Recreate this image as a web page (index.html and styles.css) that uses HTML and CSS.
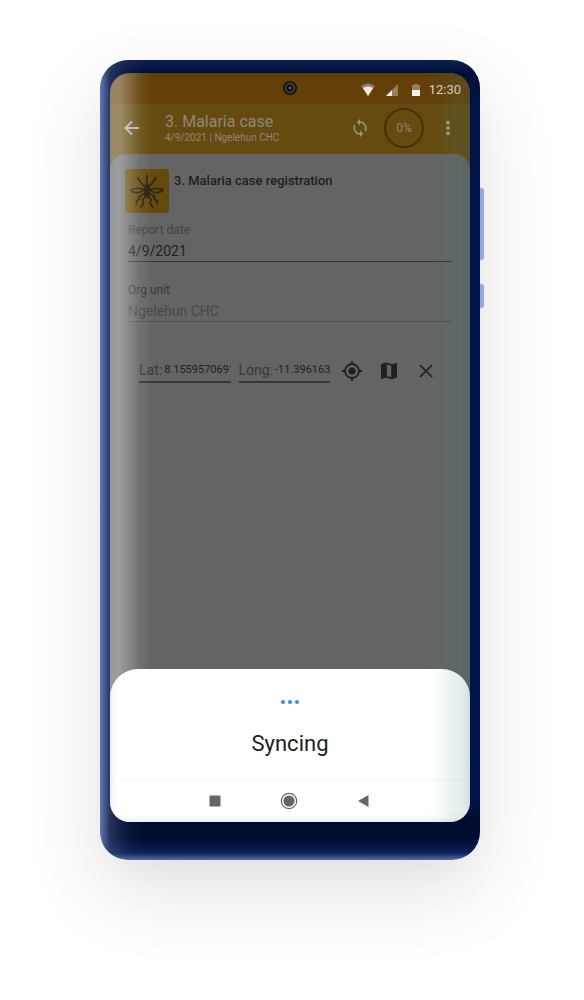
FILE: index.html
```html
<!DOCTYPE html>
<html lang="en">
<head>
<meta charset="utf-8">
<meta name="viewport" content="width=device-width, initial-scale=1">
<title>Malaria case registration</title>
<link rel="stylesheet" href="styles.css">
</head>
<body>
<main class="stage">
  <div class="phone">
    <div class="screen">
      <header class="status-bar">
        <span class="camera"></span>
        <div class="status-icons">
          <svg class="status-icon" viewBox="0 0 16 16" aria-hidden="true"><path d="M1 4Q8-1 15 4L8 14Z" fill="#94815b"/><path d="M3 6Q8 3 13 6L8 14Z" fill="#f4efe6"/></svg>
          <svg class="status-icon" viewBox="0 0 16 16" aria-hidden="true"><path d="M14 2V14H2Z" fill="#94815b"/><path d="M8 8V14H2Z" fill="#f4efe6"/></svg>
          <svg class="status-icon" viewBox="0 0 16 16" aria-hidden="true"><path d="M4 3H6V2H10V3H12V14H4Z" fill="#94815b"/><path d="M4 8H12V14H4Z" fill="#f4efe6"/></svg>
        </div>
        <span class="clock">12:30</span>
      </header>

      <div class="app-bar">
        <button class="icon-button" type="button" aria-label="Back">
          <svg class="icon icon-small" viewBox="0 0 18 18" aria-hidden="true"><path d="M16 9H3M9 2.5L2.5 9L9 15.5" fill="none" stroke="#b4afab" stroke-width="1.8"/></svg>
        </button>
        <div class="heading">
          <h1 class="title">3. Malaria case</h1>
          <p class="subtitle">4/9/2021 | Ngelehun CHC</p>
        </div>
        <button class="icon-button" type="button" aria-label="Sync">
          <svg class="icon" viewBox="0 0 24 24" fill="#969185" aria-hidden="true"><path d="M12 4V1L8 5l4 4V6c3.31 0 6 2.690 6 6 0 1.010-.25 1.970-.7 2.800l1.460 1.460C19.540 15.030 20 13.570 20 12c0-4.420-3.580-8-8-8zm0 14c-3.310 0-6-2.690-6-6 0-1.010.25-1.970.7-2.800L5.240 7.740C4.460 8.970 4 10.430 4 12c0 4.420 3.580 8 8 8v3l4-4-4-4v3z"/></svg>
        </button>
        <span class="progress">0%</span>
        <button class="icon-button" type="button" aria-label="More options">
          <svg class="icon" viewBox="0 0 20 20" fill="#969889" aria-hidden="true"><circle cx="10" cy="4.500" r="2"/><circle cx="10" cy="10" r="2"/><circle cx="10" cy="15.500" r="2"/></svg>
        </button>
      </div>

      <div class="backdrop">
        <form class="form">
          <div class="form-head">
            <svg class="tile" viewBox="0 0 44 44" aria-hidden="true">
              <rect width="44" height="44" rx="3" fill="#654b0b"/>
              <g fill="none" stroke="#282313" stroke-width="1.700" stroke-linecap="round" stroke-linejoin="round">
                <path d="M21.800 6.500V16"/>
                <path d="M12.800 8.800L15.500 13L19.500 17.500M30.800 8.800L28.100 13L24.100 17.500"/>
                <path d="M19.500 20.300Q12 18.500 5.500 20.700Q8 24 13 23.600Q17 23 19.500 20.300ZM24.100 20.300Q31.600 18.500 38.100 20.700Q35.600 24 30.600 23.600Q26.600 23 24.100 20.300Z"/>
                <path d="M19.800 24.300L14 27.500L14.500 30L11.500 32V35M23.800 24.300L29.600 27.500L29.100 30L32.100 32V35"/>
                <path d="M20.500 27L17.500 31L18.500 34.500L16 38M23.100 27L26.100 31L25.100 34.500L27.600 38"/>
              </g>
              <path d="M20 15.500Q21.800 13.500 23.600 15.500L24.500 19.500V26L21.800 29.500L19.100 26V19.500Z" fill="#282313"/>
            </svg>
            <h2 class="form-title">3. Malaria case registration</h2>
          </div>

          <div class="fields">
            <div class="field">
              <label class="field-label" for="report-date">Report date</label>
              <input class="field-input" id="report-date" type="text" value="4/9/2021">
            </div>
            <div class="field">
              <label class="field-label field-label-dark" for="org-unit">Org unit</label>
              <input class="field-input field-input-off" id="org-unit" type="text" value="Ngelehun CHC" disabled>
            </div>
          </div>

          <div class="coordinates">
            <div class="coordinate">
              <label class="coordinate-label" for="lat">Lat:</label>
              <input class="coordinate-input" id="lat" type="text" value="8.1559570691">
            </div>
            <div class="coordinate">
              <label class="coordinate-label" for="long">Long:</label>
              <input class="coordinate-input" id="long" type="text" value="-11.39616371">
            </div>
            <div class="coordinate-actions">
              <button class="icon-button" type="button" aria-label="Use my location">
                <svg class="icon" viewBox="0 0 20 20" aria-hidden="true"><circle cx="10" cy="10" r="7" fill="none" stroke="#202020" stroke-width="1.800"/><circle cx="10" cy="10" r="3.600" fill="#202020"/><path d="M10 0V3M10 17V20M0 10H3M17 10H20" stroke="#202020" stroke-width="1.800"/></svg>
              </button>
              <button class="icon-button" type="button" aria-label="Open map">
                <svg class="icon" viewBox="0 0 20 20" aria-hidden="true"><path fill="#202020" fill-rule="evenodd" d="M2 3.200L7 1.500L13 3.300L18 1.800V16.500L13 18.300L7 16.500L2 18.200ZM7.800 3.500V15L12.200 16.300V4.800Z"/></svg>
              </button>
              <button class="icon-button" type="button" aria-label="Clear coordinates">
                <svg class="icon" viewBox="0 0 20 20" aria-hidden="true"><path d="M4 4L16 16M16 4L4 16" stroke="#202020" stroke-width="1.700"/></svg>
              </button>
            </div>
          </div>
        </form>
      </div>

      <section class="sheet" role="status">
        <div class="dots"><span class="dot"></span><span class="dot"></span><span class="dot"></span></div>
        <p class="message">Syncing</p>
      </section>

      <nav class="nav-bar">
        <button class="icon-button" type="button" aria-label="Recent apps">
          <svg class="icon" viewBox="0 0 20 20" aria-hidden="true"><rect x="4.500" y="4.500" width="11" height="11" fill="#666"/></svg>
        </button>
        <button class="icon-button" type="button" aria-label="Home">
          <svg class="icon" viewBox="0 0 20 20" aria-hidden="true"><circle cx="10" cy="10" r="7.700" fill="none" stroke="#666" stroke-width="1.200"/><circle cx="10" cy="10" r="5.600" fill="#666"/></svg>
        </button>
        <button class="icon-button" type="button" aria-label="Back">
          <svg class="icon" viewBox="0 0 20 20" aria-hidden="true"><path d="M15.500 4V16L5 10Z" fill="#666"/></svg>
        </button>
      </nav>
    </div>
  </div>
  <div class="side-keys"><span class="key key-volume"></span><span class="key key-power"></span></div>
</main>
</body>
</html>
```

FILE: styles.css
```css
* {
  box-sizing: border-box;
}

body {
  margin: 0;
  background: #fff;
  color: #202020;
  font-family: Roboto, "Liberation Sans", sans-serif;
}

h1, h2, p {
  margin: 0;
}

button {
  padding: 0;
  border: 0;
  background: none;
}

input {
  min-width: 0;
  padding: 0;
  border: 0;
  border-radius: 0;
  background: none;
  color: inherit;
  font-family: inherit;
}

.stage {
  display: flex;
  justify-content: center;
  padding: 60px 16px 140px;
}

.phone {
  flex: 0 1 380px;
  min-width: 0;
  padding: 13px 10px 38px;
  border-radius: 28px;
  background:
    linear-gradient(90deg, rgba(108, 132, 190, 0.9), rgba(90, 105, 150, 0.4) 10px, rgba(90, 105, 150, 0.1) 28px, transparent 42px),
    linear-gradient(0deg, rgba(100, 120, 175, 0.9), rgba(14, 36, 100, 0.8) 7px, transparent 22px),
    linear-gradient(180deg, #0c2052, #000f38 13px, #001348 40px, #001348 740px, #000d30 762px);
  box-shadow: 0 30px 80px rgba(0, 0, 0, 0.12), 0 10px 30px rgba(0, 0, 0, 0.02);
}

.side-keys {
  display: flex;
  flex-direction: column;
  gap: 24px;
  width: 4px;
  padding-top: 128px;
}

.key {
  border-radius: 0 3px 3px 0;
  background: #97a9dc;
}

.key-volume {
  height: 72px;
}

.key-power {
  height: 24px;
}

.screen {
  position: relative;
  display: flex;
  flex-direction: column;
  overflow: hidden;
  border-radius: 20px;
  background: #654b0f;
}

.screen::after {
  content: "";
  position: absolute;
  inset: 0;
  pointer-events: none;
  background:
    linear-gradient(90deg, rgba(255, 255, 255, 0.38), rgba(255, 255, 255, 0.36) 10px, rgba(255, 255, 255, 0.08) 30px, transparent 42px),
    linear-gradient(270deg, rgba(66, 127, 127, 0.16), rgba(66, 127, 127, 0.12) 16px, rgba(66, 127, 127, 0.03) 32px, transparent 42px);
  box-shadow: inset 0 0 8px rgba(30, 60, 60, 0.16);
}

.status-bar {
  display: flex;
  position: relative;
  align-items: center;
  justify-content: flex-end;
  gap: 5px;
  height: 31px;
  padding: 2px 9px 0;
  background: #634009;
}

.camera {
  position: absolute;
  top: 8px;
  left: 50%;
  width: 14px;
  height: 14px;
  margin-left: -7px;
  border-radius: 50%;
  background: radial-gradient(circle, #555 0 1px, #111 2px 3px, #3c3c3c 4px 5px, #0c0c0c 6px);
}

.status-icons {
  display: flex;
  gap: 8px;
}

.status-icon {
  width: 16px;
  height: 16px;
}

.clock {
  color: #dcd4c8;
  font-size: 13px;
  line-height: 16px;
}

.app-bar {
  display: flex;
  align-items: center;
  height: 50px;
  padding: 0 12px 2px;
}

.icon-button {
  display: grid;
  flex: none;
  place-items: center;
  width: 20px;
  height: 20px;
}

.icon {
  width: 20px;
  height: 20px;
}

.icon-small {
  width: 18px;
  height: 18px;
}

.heading {
  flex: 1;
  margin-left: 23px;
}

.title {
  color: #8e887b;
  font-size: 16px;
  font-weight: 400;
  line-height: 20px;
}

.subtitle {
  color: #8e887b;
  font-size: 10px;
  line-height: 12px;
}

.progress {
  display: grid;
  place-items: center;
  width: 40px;
  height: 40px;
  margin: 0 14px;
  border: 2px solid #473307;
  border-radius: 50%;
  color: #8b8576;
  font-size: 12px;
}

.backdrop {
  min-height: 543px;
  padding: 15px 18px;
  border-radius: 16px 16px 0 0;
  background: #646464;
}

.form-head {
  display: flex;
  gap: 5px;
  margin-left: -3px;
}

.tile {
  flex: none;
  width: 44px;
  height: 44px;
}

.form-title {
  padding-top: 4px;
  font-size: 13px;
  font-weight: 500;
  line-height: 16px;
}

.fields {
  display: grid;
  gap: 20px;
  margin-top: 9px;
}

.field {
  display: flex;
  flex-direction: column;
}

.field-label {
  color: #434343;
  font-size: 12px;
  line-height: 16px;
}

.field-label-dark {
  color: #363636;
}

.field-input {
  width: 100%;
  height: 24px;
  padding-top: 2px;
  border-bottom: 1px solid #363636;
  font-size: 14px;
}

.field-input-off {
  border-color: #505050;
  color: #484848;
}

.coordinates {
  display: flex;
  align-items: center;
  gap: 8px;
  margin: 36px 16px 0 11px;
}

.coordinate {
  display: flex;
  flex: 1;
  align-items: center;
  gap: 2px;
  min-width: 0;
  height: 25px;
  border-bottom: 2px solid #363636;
}

.coordinate-label {
  color: #383838;
  font-size: 14px;
}

.coordinate-input {
  flex: 1;
  width: 0;
  font-size: 11px;
}

.coordinate-actions {
  display: flex;
  gap: 17px;
  margin-left: 4px;
}

.sheet {
  position: relative;
  margin-top: -28px;
  padding: 31px 16px 21px;
  border-radius: 28px 28px 0 0;
  background: #fff;
}

.dots {
  display: flex;
  justify-content: center;
  gap: 3px;
}

.dot {
  width: 4px;
  height: 4px;
  border-radius: 50%;
  background: #2e91e5;
}

.message {
  margin-top: 25px;
  font-size: 22px;
  line-height: 29px;
  text-align: center;
}

.nav-bar {
  display: flex;
  align-items: center;
  justify-content: center;
  gap: 54px;
  height: 43px;
  padding-right: 2px;
  border-top: 1px solid #f5f5f5;
  background: #fff;
}
```
